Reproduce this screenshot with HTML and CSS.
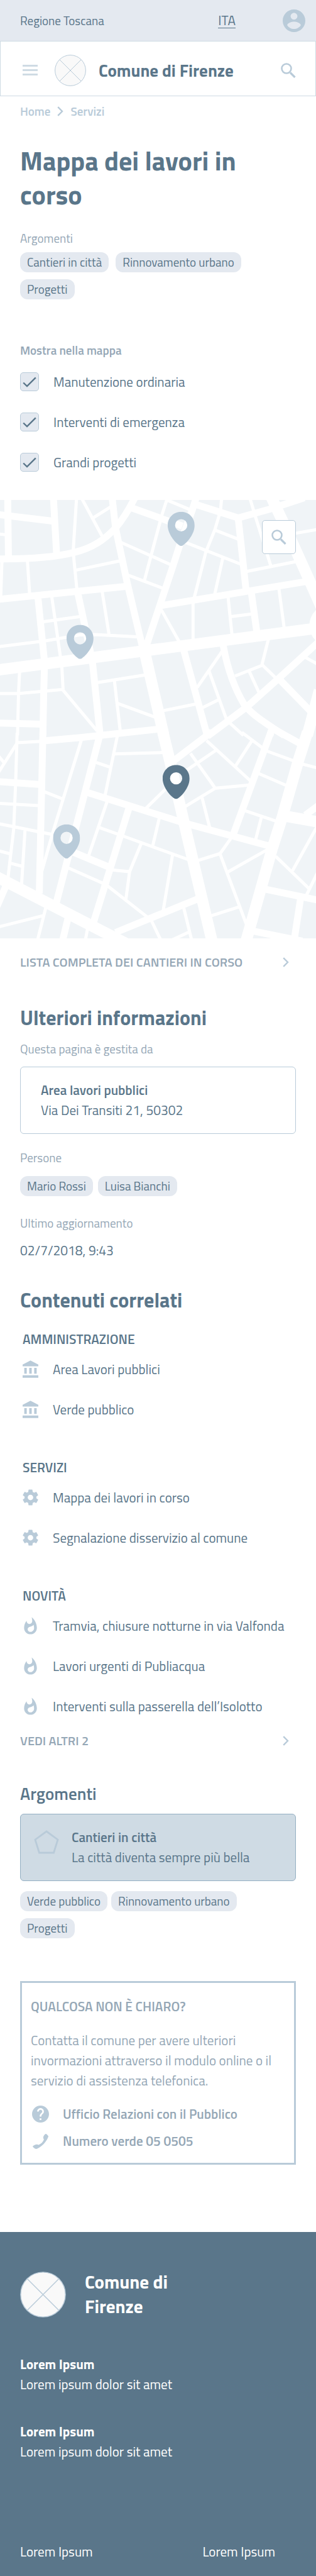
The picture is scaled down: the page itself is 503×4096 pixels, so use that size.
FILE: index.html
```html
<!DOCTYPE html>
<html lang="it">
<head>
<meta charset="utf-8">
<meta name="viewport" content="width=device-width, initial-scale=1">
<title>Mappa dei lavori in corso - Comune di Firenze</title>
<link rel="stylesheet" href="styles.css">
</head>
<body>
<svg class="sprite" aria-hidden="true">
  <symbol id="i-user" viewBox="2 2 20 20"><path d="M12 2C6.48 2 2 6.48 2 12s4.48 10 10 10 10-4.48 10-10S17.52 2 12 2zm0 3c1.66 0 3 1.34 3 3s-1.34 3-3 3-3-1.34-3-3 1.34-3 3-3zm0 14.2c-2.5 0-4.71-1.28-6-3.22.03-1.99 4-3.08 6-3.08 1.99 0 5.97 1.09 6 3.08-1.29 1.94-3.5 3.22-6 3.22z"/></symbol>
  <symbol id="i-menu" viewBox="0 0 24 17"><path d="M0 0h24v3H0zM0 7h24v3H0zM0 14h24v3H0z"/></symbol>
  <symbol id="i-search" viewBox="0 0 24 24"><g fill="none" stroke="currentColor"><circle cx="9" cy="9" r="7.5" stroke-width="2.6"/><path d="M15 15.5l7.5 7.5" stroke-width="3.2"/></g></symbol>
  <symbol id="i-chevron" viewBox="0 0 10 16"><path d="M1.2 1.2L8 8l-6.800 6.800" fill="none" stroke="currentColor" stroke-width="2.400"/></symbol>
  <symbol id="i-check" viewBox="0 0 22 17"><path d="M1.200 9.500L7 15 20.800 1.400" fill="none" stroke="currentColor" stroke-width="2.400"/></symbol>
  <symbol id="i-crest" viewBox="0 0 50 50"><circle cx="25" cy="25" r="24.400" fill="#f9f9f9" stroke="#b9cbd9" stroke-width="1"/><path d="M8 8l34 34M42 8L8 42" stroke="#b9cbd9" stroke-width="1"/></symbol>
  <symbol id="i-bank" viewBox="2 1 19 21"><path d="M4 10v7h3v-7H4zm6 0v7h3v-7h-3zM2 22h19v-3H2v3zm14-12v7h3v-7h-3zm-4.500-9L2 6v2h19V6l-9.500-5z"/></symbol>
  <symbol id="i-gear" viewBox="2 2 20 20"><path d="M19.43 12.98c.04-.32.07-.64.07-.98s-.03-.66-.07-.98l2.110-1.650c.19-.15.24-.42.12-.64l-2-3.460c-.12-.22-.39-.3-.61-.22l-2.490 1c-.52-.4-1.080-.73-1.690-.98l-.38-2.650C14.460 2.180 14.250 2 14 2h-4c-.25 0-.46.18-.49.42l-.38 2.650c-.61.25-1.170.59-1.690.98l-2.490-1c-.23-.09-.49 0-.61.22l-2 3.460c-.13.22-.07.49.12.64l2.110 1.650c-.04.32-.07.65-.07.98s.03.66.07.98l-2.110 1.650c-.19.15-.24.42-.12.64l2 3.460c.12.22.39.3.61.22l2.490-1c.52.4 1.080.73 1.690.98l.38 2.650c.03.24.24.42.49.42h4c.25 0 .46-.18.49-.42l.38-2.650c.61-.25 1.170-.59 1.690-.98l2.490 1c.23.09.49 0 .61-.22l2-3.460c.12-.22.07-.49-.12-.64l-2.110-1.650zM12 15.500c-1.930 0-3.500-1.570-3.500-3.500s1.570-3.500 3.500-3.500 3.500 1.570 3.500 3.500-1.570 3.500-3.500 3.500z"/></symbol>
  <symbol id="i-flame" viewBox="2.500 0.300 19 22"><path d="M13.500.67s.74 2.650.74 4.800c0 2.060-1.350 3.730-3.410 3.730-2.070 0-3.630-1.670-3.630-3.730l.03-.36C5.210 7.510 4 10.620 4 14c0 4.420 3.580 8 8 8s8-3.580 8-8C20 8.610 17.410 3.800 13.500.67zM11.710 19c-1.780 0-3.220-1.400-3.220-3.140 0-1.620 1.050-2.760 2.810-3.120 1.770-.36 3.600-1.210 4.620-2.580.39 1.290.59 2.650.59 4.040 0 2.650-2.150 4.800-4.800 4.800z"/></symbol>
  <symbol id="i-pentagon" viewBox="0 0 40 38"><path d="M20 2L38 15.200 31.500 36H8.500L2 15.200z" fill="none" stroke="currentColor" stroke-width="2.800"/></symbol>
  <symbol id="i-help" viewBox="2 2 20 20"><path d="M12 2C6.480 2 2 6.480 2 12s4.480 10 10 10 10-4.480 10-10S17.520 2 12 2zm1 17h-2v-2h2v2zm2.070-7.750l-.9.920C13.450 12.900 13 13.500 13 15h-2v-.5c0-1.100.45-2.100 1.170-2.830l1.240-1.260c.37-.36.59-.86.59-1.410 0-1.100-.9-2-2-2s-2 .9-2 2H8c0-2.210 1.790-4 4-4s4 1.790 4 4c0 .88-.36 1.680-.93 2.250z"/></symbol>
  <symbol id="i-phone" viewBox="0 0 26 26"><path d="M1.500 20.500c2.500-2.300 5-3 7.200-2.300l1.300.6c3.800-1.600 6.700-4.600 8.200-8.300l-.8-1.500c-.7-2 .1-4.200 2.300-6.400.9-.9 1.900-.8 2.700-.1l2 2.100c.7.700.8 1.600.3 2.500C21 15.500 15.500 21 8 24.600c-1.800.7-3.400.3-4.800-.9l-1.600-1.500c-.6-.6-.6-1.200-.1-1.700z"/></symbol>
  <symbol id="i-pin" viewBox="0 0 64 81"><path fill-rule="evenodd" d="M32 0C14.300 0 0 14 0 32c0 19 16 40 28.500 48q3.500 2 7 0C48 72 64 51 64 32 64 14 49.700 0 32 0zm0 17.500a14.500 14.500 0 1 1 0 29 14.500 14.500 0 0 1 0-29z"/></symbol>
</svg>

<div class="topbar">
  <a class="topbar-region" href="#">Regione Toscana</a>
  <div class="topbar-tools">
    <a class="topbar-lang" href="#">ITA</a>
    <button class="icon-button" type="button" aria-label="Accedi"><svg class="icon-user"><use href="#i-user"/></svg></button>
  </div>
</div>

<header class="site-header">
  <button class="icon-button" type="button" aria-label="Menu"><svg class="icon-menu"><use href="#i-menu"/></svg></button>
  <a class="brand" href="#"><svg class="brand-crest"><use href="#i-crest"/></svg><span>Comune di Firenze</span></a>
  <button class="icon-button" type="button" aria-label="Cerca"><svg class="icon-search"><use href="#i-search"/></svg></button>
</header>

<main>
  <section class="wrap intro">
    <nav class="breadcrumb" aria-label="Percorso">
      <a href="#">Home</a><svg class="icon-chevron"><use href="#i-chevron"/></svg><a href="#">Servizi</a>
    </nav>
    <h1>Mappa dei lavori in corso</h1>
    <p class="label">Argomenti</p>
    <div class="tags tags-wide">
      <a class="tag" href="#">Cantieri in città</a>
      <a class="tag" href="#">Rinnovamento urbano</a>
      <a class="tag" href="#">Progetti</a>
    </div>
    <fieldset class="filters">
      <legend>Mostra nella mappa</legend>
      <label class="filter"><span class="box"><input type="checkbox" checked><svg><use href="#i-check"/></svg></span>Manutenzione ordinaria</label>
      <label class="filter"><span class="box"><input type="checkbox" checked><svg><use href="#i-check"/></svg></span>Interventi di emergenza</label>
      <label class="filter"><span class="box"><input type="checkbox" checked><svg><use href="#i-check"/></svg></span>Grandi progetti</label>
    </fieldset>
  </section>

  <div class="map">
    <svg class="map-art" viewBox="0 0 750 1040" role="img" aria-label="Mappa dei cantieri">
      <rect width="750" height="1040" class="land"/>
      <g transform="translate(0 -6) scale(.4783 .3571)">
        <ellipse cx="1640" cy="850" rx="105" ry="140" fill="#fff"/>
        <g class="road avenue">
          <path d="M-20 1147L690 1023 1580 867M720 1040L783 1405 812 1575M1340-20L1400 150 1536 553 1600 745M1585 1280L1525 1580"/>
        </g>
        <g class="road street">
          <path d="M-10 408H20C180 408 280 395 368 365 460 335 520 280 575 200 610 145 640 80 670 0"/>
          <path d="M38 0L42 400M265 0L281 380M-10 113L260 157M556-5L573 200 630 560 708 1000M655 70L905 190M974 0L955 80 892 315 862 440 725 990"/>
          <path d="M975 48L1182 136 1345 75 1510 2M1182 137L1221 615M1247 630L1274 890M795 719L1515 559M-10 677L630 590M188 660L220 1080 220 1145 217 1290 213 1575M387 640L451 1040"/>
          <path d="M912 1015L1028 1580M1108 985C1125 1110 1160 1260 1212 1375L1225 1395C1260 1450 1320 1500 1410 1580M1030 1585L1225 1390 1384 1200 1580 960"/>
          <path d="M1385 1205L1545 1425M459 1095L497 1580M-10 1498L213 1505M1352 1525L1340 1580"/>
        </g>
        <g class="road lane">
          <path d="M-10 242L30 248M380 0L363 360 381 605M403 0L510 265M465 133L552 60M590 292L850 448M632 514L806 602M828 15L803 118 717 550M825 15L945 82"/>
          <path d="M1100 0L1094 90 1066 215 1022 360 964 665M1067 217L1185 278M900 288L1200 446M1106 400L1066 640M1239 0L1267 125 1344 455M1222 492L1468 426M1440 244L1580 211"/>
          <path d="M10 410L3 675M136 420L147 640M376 483L592 422M257 660L300 1060M507 625L541 910M212 826L400 790M-10 991L225 952 400 912 470 910 690 926M800 745L888 955"/>
          <path d="M958 700V945M1132 665L1151 910M1145 791L1250 774M1384 605L1410 865M1102 1022L978 1262M1038 1155L1123 1470M1005 1396L1084 1344M1331 945L1300 1110 1368 1198M1166 1186L1302 1114M1237 1155L1284 1292"/>
          <path d="M1510 1058L1580 1110M1138 1495L1208 1580M97 1160L92 1300 87 1580M-10 1302H92L310 1275 482 1550M307 1125L313 1275M480 1230L720 1179M568 1220L597 1555M585 1368L770 1459M808 1416L975 1371"/>
        </g>
      </g>
      <g transform="translate(0 554) scale(.4783 .3827)">
        <g class="road avenue">
          <path d="M1526-10L1480 170 1400 520 1350 715 1295 960 1221 1285M808-10L843 170 913 550 1052 1285M-20 885L630 1303M1405 509L1590 550"/>
        </g>
        <g class="road street">
          <path d="M1347-20L1159 620M1370-20L1490 62M1052-12L860 170M430 363L910 552 1340 697M493 20L280 1045M337 1145L310 1285M213-10L195 990M-10 297L205 315"/>
          <path d="M573 1232L985 1022M340 722L548 830M640 460L465 1165M27 950L-15 1070M1515 505L1580 445M1320 965L1580 1032M1491 1025L1459 1285M1255 1223L1500 1285M215 45L400 24 785-28"/>
        </g>
        <g class="road lane">
          <path d="M1200-8L1310 95M1320 106L1460 170M1500 188L1580 214M1249 45L1169 200M1025 43L1245 295M1072 103L922 230M945 122L1068 338 1238 318M1068 338L918 452M1003 398L1041 585M1282 246L1425 323M1212 476L1372 543M1297 518L1268 660"/>
          <path d="M725 462L840 320M405 35L265 600 208 850M582 15L521 385M531 422L440 755M568 125L810 117M477 179L547 208M218 359L314 406M85-5L78 290 68 590 40 890M82 56L205 48M85 58L-10 245M-10 135L22 182"/>
          <path d="M-10 432L195 446M-10 557L265 626M124 600L107 935M-10 725L52 745M50 802L110 822M555 844L643 855 701 680M643 855L624 1035M493 582L610 634 938 782M790 525L758 695M856 752L810 1095M335 830L525 935 730 1135M750 1155L800 1285"/>
          <path d="M911 1075L952 1285M845 1283L938 1229M434 1210L423 1285M227 1080L185 1285M215 1127L-10 1198M983 785L1092 743 1145 650M1092 745L1222 1180M1132 856L1330 716M1048 1128L1188 1073M1368 760L1532 958M1576 570L1452 848M1578 855L1521 1000"/>
        </g>
      </g>
      <g class="pins">
        <use href="#i-pin" x="398" y="28" width="64" height="81"/>
        <use href="#i-pin" x="158" y="296" width="64" height="81"/>
        <use href="#i-pin" x="126" y="769" width="64" height="81"/>
        <use class="pin-active" href="#i-pin" x="386" y="628" width="64" height="81"/>
      </g>
    </svg>
    <button class="map-search" type="button" aria-label="Cerca nella mappa"><svg class="icon-search"><use href="#i-search"/></svg></button>
  </div>

  <div class="wrap">
    <a class="more more-list" href="#"><span>LISTA COMPLETA DEI CANTIERI IN CORSO</span><svg class="icon-chevron"><use href="#i-chevron"/></svg></a>

    <section class="info">
      <h2>Ulteriori informazioni</h2>
      <p class="label label-office">Questa pagina è gestita da</p>
      <a class="card" href="#"><strong>Area lavori pubblici</strong><span>Via Dei Transiti 21, 50302</span></a>
      <p class="label label-people">Persone</p>
      <div class="tags tags-people">
        <a class="tag" href="#">Mario Rossi</a>
        <a class="tag" href="#">Luisa Bianchi</a>
      </div>
      <p class="label label-date">Ultimo aggiornamento</p>
      <p class="date">02/7/2018, 9:43</p>
    </section>

    <section class="related">
      <h2>Contenuti correlati</h2>
      <h3>AMMINISTRAZIONE</h3>
      <ul class="links">
        <li><svg><use href="#i-bank"/></svg><a href="#">Area Lavori pubblici</a></li>
        <li><svg><use href="#i-bank"/></svg><a href="#">Verde pubblico</a></li>
      </ul>
      <h3>SERVIZI</h3>
      <ul class="links">
        <li><svg><use href="#i-gear"/></svg><a href="#">Mappa dei lavori in corso</a></li>
        <li><svg><use href="#i-gear"/></svg><a href="#">Segnalazione disservizio al comune</a></li>
      </ul>
      <h3>NOVITÀ</h3>
      <ul class="links">
        <li><svg><use href="#i-flame"/></svg><a href="#">Tramvia, chiusure notturne in via Valfonda</a></li>
        <li><svg><use href="#i-flame"/></svg><a href="#">Lavori urgenti di Publiacqua</a></li>
        <li><svg><use href="#i-flame"/></svg><a href="#">Interventi sulla passerella dell’Isolotto</a></li>
      </ul>
      <a class="more" href="#"><span>VEDI ALTRI 2</span><svg class="icon-chevron"><use href="#i-chevron"/></svg></a>
    </section>

    <section class="topics">
      <h2>Argomenti</h2>
      <a class="card card-topic" href="#"><svg class="icon-pentagon"><use href="#i-pentagon"/></svg><span class="card-text"><strong>Cantieri in città</strong><span>La città diventa sempre più bella</span></span></a>
      <div class="tags">
        <a class="tag" href="#">Verde pubblico</a>
        <a class="tag" href="#">Rinnovamento urbano</a>
        <a class="tag" href="#">Progetti</a>
      </div>
    </section>

    <section class="help">
      <h2>QUALCOSA NON È CHIARO?</h2>
      <p>Contatta il comune per avere ulteriori invormazioni attraverso il modulo online o il servizio di assistenza telefonica.</p>
      <ul>
        <li><svg><use href="#i-help"/></svg><a href="#">Ufficio Relazioni con il Pubblico</a></li>
        <li><svg><use href="#i-phone"/></svg><a href="#">Numero verde 05 0505</a></li>
      </ul>
    </section>
  </div>
</main>

<footer class="footer">
  <div class="footer-brand"><svg><use href="#i-crest"/></svg><p>Comune di Firenze</p></div>
  <div class="footer-block"><strong>Lorem Ipsum</strong><span>Lorem ipsum dolor sit amet</span></div>
  <div class="footer-block"><strong>Lorem Ipsum</strong><span>Lorem ipsum dolor sit amet</span></div>
  <nav class="footer-links" aria-label="Link utili"><a href="#">Lorem Ipsum</a><a href="#">Lorem Ipsum</a></nav>
</footer>
</body>
</html>
```
FILE: styles.css
```css
:root {
  --ink: #5a768a;
  --muted: #95a7b6;
  --soft: #b9cbd9;
  --line: #cfdbe4;
  --tint: #e4e9f0;
}

* { box-sizing: border-box; }

body {
  margin: 0;
  background: #fff;
  color: var(--ink);
  font-family: "Titillium Web", Roboto, "Liberation Sans", sans-serif;
  font-size: 21px;
  line-height: 32px;
}

h1, h2, h3, p, ul { margin: 0; padding: 0; }
ul { list-style: none; }
a { color: inherit; text-decoration: none; }
strong { font-weight: 600; }
svg { display: block; fill: currentColor; flex: none; }
.sprite { position: absolute; width: 0; height: 0; }
.wrap { padding: 0 32px; }

.icon-button {
  display: block;
  padding: 0;
  border: 0;
  background: none;
  color: var(--soft);
  cursor: pointer;
}
.icon-user { width: 36px; height: 36px; }
.icon-menu { width: 24px; height: 17px; color: var(--line); }
.icon-search { width: 24px; height: 24px; }
.icon-chevron { width: 10px; height: 16px; color: var(--soft); }

.topbar {
  display: flex;
  align-items: center;
  justify-content: space-between;
  height: 65px;
  padding: 0 17px 0 32px;
  background: var(--tint);
}
.topbar-region { font-size: 19px; }
.topbar-tools { display: flex; align-items: center; gap: 75px; }
.topbar-lang {
  border-bottom: 1px solid var(--ink);
  line-height: 24px;
}

.site-header {
  display: flex;
  align-items: center;
  justify-content: space-between;
  height: 88px;
  padding: 5px 31px 0 35px;
  border: 1px solid var(--line);
}
.brand {
  display: flex;
  flex: 1;
  align-items: center;
  gap: 20px;
  margin-left: 27px;
  font-size: 27px;
  font-weight: 700;
}
.brand-crest { width: 50px; height: 50px; }

.breadcrumb {
  display: flex;
  align-items: center;
  gap: 11px;
  padding-top: 12px;
  color: var(--soft);
  font-size: 19px;
  font-weight: 600;
  line-height: 24px;
}

h1 {
  margin-top: 39px;
  padding-right: 48px;
  font-size: 42px;
  line-height: 54px;
}
.label {
  color: var(--muted);
  font-size: 19px;
  line-height: 24px;
}
.intro .label { margin: 31px 0 10px; }

.tags {
  display: flex;
  flex-wrap: wrap;
  gap: 11px 6px;
  padding-right: 48px;
}
.tags-wide { gap: 11px; }
.tags-people { gap: 8px; }
.tag {
  padding: 0 11px;
  border-radius: 12px;
  background: var(--tint);
  font-size: 19px;
}

.filters {
  display: grid;
  gap: 32px;
  margin: 69px 0 44px;
  padding: 0;
  border: 0;
}
.filters legend {
  margin-bottom: 22px;
  padding: 0;
  color: var(--muted);
  font-size: 19px;
  font-weight: 600;
  line-height: 24px;
}
.filter { display: flex; align-items: center; gap: 23px; }
.box { display: grid; place-items: center; }
.box > * { grid-area: 1 / 1; }
.box input {
  width: 30px;
  height: 30px;
  margin: 0;
  border: 1px solid var(--soft);
  border-radius: 5px;
  background: var(--tint);
  appearance: none;
}
.box svg { z-index: 1; width: 22px; height: 17px; pointer-events: none; }
.box input:not(:checked) + svg { visibility: hidden; }

.map { position: relative; }
.map-art { width: 100%; height: auto; }
.land { fill: #f0f4f7; }
.road path { fill: none; stroke: #fff; vector-effect: non-scaling-stroke; }
.avenue path { stroke-width: 18px; }
.street path { stroke-width: 11px; }
.lane path { stroke-width: 5px; }
.pins { fill: var(--soft); }
.pin-active { fill: var(--ink); }
.map-search {
  position: absolute;
  top: 32px;
  right: 32px;
  display: grid;
  place-items: center;
  width: 54px;
  height: 54px;
  padding: 0;
  border: 1px solid var(--soft);
  border-radius: 5px;
  background: #fff;
  color: var(--soft);
}

.more {
  display: flex;
  align-items: center;
  justify-content: space-between;
  padding-right: 11px;
  color: var(--muted);
  font-size: 20px;
  font-weight: 600;
  line-height: 24px;
}
.more-list { margin-top: 26px; }

h2 { font-size: 32px; line-height: 40px; }
.info h2 { margin-top: 56px; }
.label-office { margin: 18px 0 16px; }
.label-people { margin: 26px 0 17px; }
.label-date { margin: 31px 0 15px; }
.card {
  display: flex;
  flex-direction: column;
  padding: 20px 32px 21px;
  border: 1px solid var(--soft);
  border-radius: 6px;
}

.related h2 { margin-top: 43px; }
h3 {
  padding-left: 4px;
  font-size: 21px;
  font-weight: 600;
}
.related h2 + h3 { margin-top: 26px; }
.links + h3 { margin-top: 60px; }
.links { display: grid; gap: 32px; margin: 16px 0 27px; padding-left: 4px; }
.links li { display: flex; align-items: center; gap: 23px; }
.links svg { width: 25px; height: 28px; color: var(--soft); }

.topics h2 {
  margin: 56px 0 16px;
  font-size: 27px;
  font-weight: 600;
  line-height: 32px;
}
.card-topic {
  flex-direction: row;
  gap: 20px;
  padding: 20px 21px 21px;
  border-color: #94afc3;
  background: var(--line);
}
.card-text { display: flex; flex-direction: column; }
.icon-pentagon { width: 40px; height: 38px; margin-top: 5px; color: var(--soft); }
.topics .tags { margin-top: 16px; }

.help {
  margin-top: 68px;
  padding: 21px 14px 19px;
  border: 3px solid var(--soft);
  color: var(--muted);
}
.help h2 { font-size: 21px; font-weight: 600; line-height: 32px; }
.help p { margin: 22px 0 21px; }
.help ul { display: grid; gap: 11px; }
.help li { display: flex; align-items: center; gap: 22px; padding-left: 2px; font-weight: 600; }
.help svg { width: 27px; height: 27px; color: var(--soft); }

.footer {
  margin-top: 107px;
  padding: 60px 32px 23px;
  background: var(--ink);
  color: #fff;
}
.footer-brand {
  display: flex;
  align-items: center;
  gap: 30px;
  margin-bottom: 56px;
  font-size: 29px;
  font-weight: 700;
  line-height: 39px;
}
.footer-brand svg { width: 73px; height: 73px; }
.footer-brand p { max-width: 160px; }
.footer-block { display: flex; flex-direction: column; }
.footer-block + .footer-block { margin-top: 43px; }
.footer-block strong { font-weight: 700; }
.footer-links {
  display: flex;
  justify-content: space-between;
  margin-top: 127px;
  padding-right: 33px;
}
```
